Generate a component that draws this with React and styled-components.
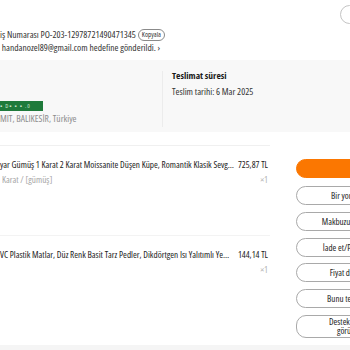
import React from "react";
import styled, { createGlobalStyle } from "styled-components";

const Global = createGlobalStyle`
  body {
    margin: 0;
    background: #f5f5f5;
    font-family: "Open Sans", "Noto Sans", sans-serif;
    font-stretch: condensed;
    color: #222;
    overflow: hidden;
  }
`;

const Page = styled.div`
  width: 350px;
  overflow: hidden;
`;

const Header = styled.header`
  background: #fff;
  height: 60px;
  font-size: 9.5px;
`;

const TopBar = styled.div`
  display: flex;
  justify-content: flex-end;
  padding-top: 5px;
  margin-bottom: 4px;
`;

const RoundButton = styled.div`
  width: 17px;
  height: 17px;
  border: 1px solid #c4c4c4;
  border-radius: 50%;
  margin-right: -9px;
`;

const InfoLine = styled.div`
  display: flex;
  align-items: center;
  height: 13px;
  white-space: nowrap;
  color: #333;
`;

const CopyPill = styled.span`
  margin-left: 2px;
  height: 10px;
  line-height: 10px;
  padding: 0 3px;
  border: 1px solid #8a8a8a;
  border-radius: 6px;
  font-size: 7px;
  color: #333;
`;

const Summary = styled.section`
  display: flex;
  background: #f8f8f8;
  height: 72px;
  box-sizing: border-box;
  padding: 11px 0 5px;
  font-size: 9.5px;
`;

const AddressCol = styled.div`
  width: 162px;
  display: flex;
  flex-direction: column;
  justify-content: flex-end;
  padding-bottom: 2px;
`;

const PhoneBadge = styled.div`
  width: 43px;
  height: 10px;
  line-height: 10px;
  background: #1f7a3b;
  color: #cfe6d2;
  font-size: 6px;
  letter-spacing: 1px;
  overflow: hidden;
  white-space: nowrap;
  margin-bottom: 2px;
`;

const Address = styled.div`
  height: 12px;
  line-height: 12px;
  color: #8c8c8c;
`;

const DeliveryCol = styled.div`
  border-left: 1px solid #ececec;
  padding-left: 9px;
`;

const DeliveryTitle = styled.div`
  font-weight: 700;
  line-height: 10px;
  color: #1a1a1a;
`;

const DeliveryDate = styled.div`
  margin-top: 5px;
  line-height: 12px;
  color: #333;
`;

const Content = styled.section`
  display: flex;
  gap: 26px;
  background: #fff;
  height: 213px;
  box-sizing: border-box;
  padding-top: 13px;
  font-size: 9.2px;
`;

const ItemList = styled.div`
  width: 270px;
  flex-shrink: 0;
  border-top: 1px solid #f0f0f0;
`;

const Item = styled.div`
  height: 90px;
  padding: 13px 2px 0 0;
  box-sizing: border-box;
  border-bottom: 1px solid ${p => (p.$last ? "transparent" : "#f3f3f3")};
`;

const ItemRow = styled.div`
  display: flex;
  align-items: center;
  gap: 3px;
  height: 12px;
  line-height: 12px;
  margin-bottom: ${p => p.$gap || 0}px;
`;

const ItemTitle = styled.div`
  flex: 1;
  min-width: 0;
  overflow: hidden;
  white-space: nowrap;
  text-overflow: ellipsis;
  color: #222;
`;

const Price = styled.div`
  white-space: nowrap;
  color: #222;
`;

const Variant = styled.div`
  flex: 1;
  padding-left: 2px;
  color: #a6a6a6;
`;

const Qty = styled.div`
  color: #b3b3b3;
`;

const Actions = styled.div`
  width: 112px;
  flex-shrink: 0;
  display: flex;
  flex-direction: column;
  gap: 6.8px;
  padding-top: 14px;
`;

const ActionButton = styled.div`
  box-sizing: border-box;
  height: ${p => (p.$tall ? 23 : 19)}px;
  border-radius: 10px;
  border: 1px solid ${p => (p.$primary ? "#fb7701" : "#a9a9a9")};
  background: ${p => (p.$primary ? "#fb7701" : "#fff")};
  color: #222;
  margin-bottom: ${p => (p.$primary ? 1.2 : 0)}px;
  display: flex;
  align-items: center;
  justify-content: center;
  text-align: center;
  line-height: 9px;
  font-size: 9px;
  padding: 0 6px;
`;

const items = [
  {
    title:
      "yar Gümüş 1 Karat 2 Karat Moissanite Düşen Küpe, Romantik Klasik Sevgililer Günü Hediyesi",
    price: "725,87 TL",
    variant: "Karat / [gümüş]",
  },
  {
    title:
      "VC Plastik Matlar, Düz Renk Basit Tarz Pedler, Dikdörtgen Isı Yalıtımlı Yemek Masası Altlığı",
    price: "144,14 TL",
    variant: "",
  },
];

const actions = [
  "Bir yorum yaz",
  "Makbuzu görüntüle",
  "İade et/Para iadesi",
  "Fiyat düzeltme",
  "Bunu tekrar alın",
];

export default function App() {
  return (
    <Page>
      <Global />
      <Header>
        <TopBar>
          <RoundButton />
        </TopBar>
        <InfoLine>
          iş Numarası PO-203-12978721490471345
          <CopyPill>Kopyala</CopyPill>
        </InfoLine>
        <InfoLine>&nbsp;handanozel89@gmail.com hedefine gönderildi. ›</InfoLine>
      </Header>

      <Summary>
        <AddressCol>
          <PhoneBadge>▪ D▪ ▪ ▪ .0</PhoneBadge>
          <Address>MIT, BALIKESİR, Türkiye</Address>
        </AddressCol>
        <DeliveryCol>
          <DeliveryTitle>Teslimat süresi</DeliveryTitle>
          <DeliveryDate>Teslim tarihi: 6 Mar 2025</DeliveryDate>
        </DeliveryCol>
      </Summary>

      <Content>
        <ItemList>
          {items.map((it, i) => (
            <Item key={i} $last={i === items.length - 1}>
              <ItemRow $gap={3}>
                <ItemTitle>{it.title}</ItemTitle>
                <Price>{it.price}</Price>
              </ItemRow>
              <ItemRow>
                <Variant>{it.variant}</Variant>
                <Qty>×1</Qty>
              </ItemRow>
            </Item>
          ))}
        </ItemList>
        <Actions>
          <ActionButton $primary />
          {actions.map(a => (
            <ActionButton key={a}>{a}</ActionButton>
          ))}
          <ActionButton $tall>
            Destek talebini
            <br />
            görüntüle
          </ActionButton>
        </Actions>
      </Content>
    </Page>
  );
}
